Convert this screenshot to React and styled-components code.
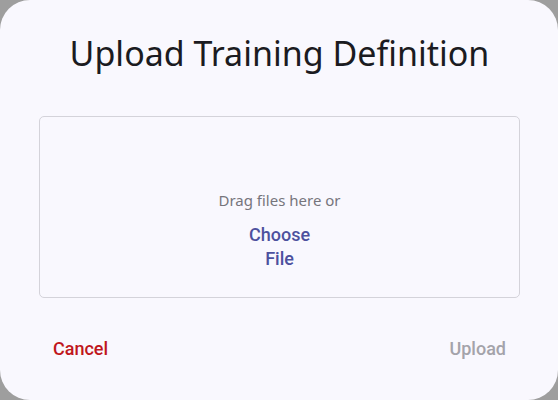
import React from 'react';
import styled, { createGlobalStyle } from 'styled-components';

const GlobalStyle = createGlobalStyle`
  html, body {
    margin: 0;
    padding: 0;
    background: #9e9e9e;
  }
  #root {
    width: 558px;
    height: 400px;
  }
`;

const Dialog = styled.div`
  box-sizing: border-box;
  width: 558px;
  height: 400px;
  background: #f9f8fe;
  border-radius: 30px;
  display: flex;
  flex-direction: column;
  padding: 0 38px 0 39px;
`;

const Title = styled.h1`
  margin: 0;
  padding-top: 30px;
  height: 116px;
  flex-shrink: 0;
  box-sizing: border-box;
  text-align: center;
  font-family: 'Noto Sans', sans-serif;
  font-weight: 400;
  font-size: 34px;
  line-height: 46px;
  color: #1b1b21;
`;

const DropZone = styled.div`
  height: 182px;
  flex-shrink: 0;
  box-sizing: border-box;
  border: 1px solid #d4d3da;
  border-radius: 5px;
  display: flex;
  flex-direction: column;
  align-items: center;
  padding-top: 73px;
`;

const Hint = styled.div`
  font-family: 'Noto Sans', sans-serif;
  font-size: 15px;
  line-height: 20px;
  color: #76757c;
  margin-bottom: 13px;
`;

const ChooseButton = styled.button`
  border: none;
  background: none;
  width: 72px;
  padding: 0;
  font-family: Roboto, sans-serif;
  font-weight: 500;
  font-size: 18px;
  line-height: 24px;
  color: #4d519e;
  cursor: pointer;
`;

const Actions = styled.div`
  display: flex;
  justify-content: space-between;
  align-items: center;
  padding: 40px 14px 0 14px;
`;

const TextButton = styled.button`
  border: none;
  background: none;
  padding: 0;
  font-family: Roboto, sans-serif;
  font-weight: 500;
  font-size: 18px;
  line-height: 21px;
  color: ${(p) => (p.$disabled ? '#a4a3aa' : '#c0161c')};
  cursor: ${(p) => (p.$disabled ? 'default' : 'pointer')};
`;

export default function App() {
  return (
    <>
      <GlobalStyle />
      <Dialog>
        <Title>Upload Training Definition</Title>
        <DropZone>
          <Hint>Drag files here or</Hint>
          <ChooseButton>Choose File</ChooseButton>
        </DropZone>
        <Actions>
          <TextButton>Cancel</TextButton>
          <TextButton $disabled>Upload</TextButton>
        </Actions>
      </Dialog>
    </>
  );
}
